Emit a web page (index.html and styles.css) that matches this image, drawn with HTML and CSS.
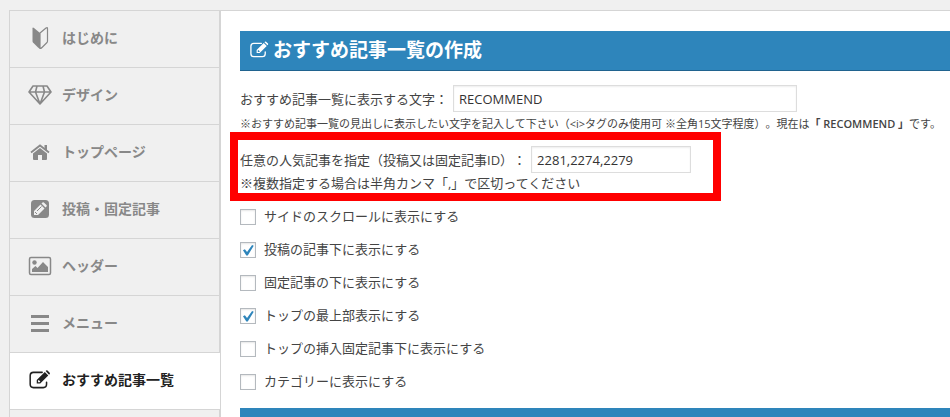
FILE: index.html
```html
<!DOCTYPE html>
<html lang="ja">
<head>
<meta charset="utf-8">
<title>おすすめ記事一覧の作成</title>
<link rel="stylesheet" href="styles.css">
</head>
<body>
<svg class="defs" width="0" height="0">
	<symbol id="ic-edit" viewBox="0 0 22 18">
		<path d="M13 2H5Q2 2 2 5v8q0 3 3 3h9q3 0 3-3v-2" fill="none" stroke="currentColor" stroke-width="1.400" stroke-linecap="round"/>
		<path fill-rule="evenodd" d="M8 12.200V9l7.400-7.400 3.200 3.200-7.400 7.400zM9.200 9.500v1.500h1.500l.6-.6-1.500-1.500zM16.200.8l.5-.5q.6-.5 1.200 0l2 2q.5.600 0 1.200l-.6.600z" fill="currentColor"/>
	</symbol>
</svg>
<div class="wrap">
	<nav class="menu">
		<a href="#start">
			<svg class="icon" viewBox="0 0 24 24">
				<path d="M4.500 2.500Q4.500 1 6 2l6 5v15.500Q11 22.500 10 21.500L5 16.500q-.5-.5-.5-1.500z" fill="currentColor"/>
				<path d="M12 7l6-5q1.500-1 1.500.5V15q0 1-.5 1.500l-5 5q-1 1-2 1z" fill="none" stroke="currentColor" stroke-width="1.200"/>
			</svg>
			はじめに</a>
		<a href="#design">
			<svg class="icon" viewBox="0 0 24 24">
				<path d="M5 3h14l4 6-11 12L1 9zM1 9h22M9 3L7.500 9 12 21l4.500-12L15 3" fill="none" stroke="currentColor" stroke-width="1.600" stroke-linejoin="round"/>
			</svg>
			デザイン</a>
		<a href="#top">
			<svg class="icon" viewBox="0 0 24 24">
				<path d="M5 13.500L12 8l7 5.500V19q0 1-1 1h-4v-5h-4v5H6q-1 0-1-1z" fill="currentColor"/>
				<path d="M3 12.500L12 5.500l9 7" fill="none" stroke="currentColor" stroke-width="1.800"/>
				<path d="M16.500 5H19v6l-2.500-2z" fill="currentColor"/>
			</svg>
			トップページ</a>
		<a href="#post">
			<svg class="icon" viewBox="0 0 24 24">
				<rect x="3" y="3" width="18" height="18" rx="3.500" fill="currentColor"/>
				<path d="M6 18v-4l6.500-6.500 4 4L10 18zM13.500 6.500l1-1q.7-.7 1.400 0l2.600 2.600q.7.700 0 1.400l-1 1z" fill="#f0f0f0"/>
				<path d="M7 15l2 2M9 14l4.500-4.500" stroke="currentColor"/>
			</svg>
			投稿・固定記事</a>
		<a href="#header">
			<svg class="icon" viewBox="0 0 24 24">
				<rect x="1.500" y="3.500" width="21" height="17" rx="1.500" fill="none" stroke="currentColor" stroke-width="1.500"/>
				<circle cx="6.500" cy="8.500" r="2.200" fill="currentColor"/>
				<path d="M4 18v-3l3.500-3 2 2L15 8l5 5v5z" fill="currentColor"/>
			</svg>
			ヘッダー</a>
		<a href="#nav">
			<svg class="icon" viewBox="0 0 24 24">
				<path d="M3 5.500h18M3 12.500h18M3 19.500h18" stroke="currentColor" stroke-width="3"/>
			</svg>
			メニュー</a>
		<a href="#recommend" class="active">
			<svg class="icon"><use href="#ic-edit"/></svg>
			おすすめ記事一覧</a>
		<a href="#next"></a>
	</nav>
	<main class="panel">
		<h2><svg class="head-icon"><use href="#ic-edit"/></svg>おすすめ記事一覧の作成</h2>
		<div class="row">
			<label for="rec_title">おすすめ記事一覧に表示する文字：</label>
			<input type="text" id="rec_title" class="wide" value="RECOMMEND">
		</div>
		<p class="note">※おすすめ記事一覧の見出しに表示したい文字を記入して下さい（&lt;i&gt;タグのみ使用可 ※全角15文字程度）。現在は<b>「 RECOMMEND 」</b>です。</p>
		<div class="highlight">
			<div class="row">
				<label for="rec_ids">任意の人気記事を指定（投稿又は固定記事ID）：</label>
				<input type="text" id="rec_ids" value="2281,2274,2279">
			</div>
			<p>※複数指定する場合は半角カンマ「,」で区切ってください</p>
		</div>
		<div class="checks">
			<label><input type="checkbox">サイドのスクロールに表示にする</label>
			<label><input type="checkbox" checked>投稿の記事下に表示にする</label>
			<label><input type="checkbox">固定記事の下に表示にする</label>
			<label><input type="checkbox" checked>トップの最上部表示にする</label>
			<label><input type="checkbox">トップの挿入固定記事下に表示にする</label>
			<label><input type="checkbox">カテゴリーに表示にする</label>
		</div>
		<h2></h2>
	</main>
</div>
</body>
</html>
```
FILE: styles.css
```css
* {
	box-sizing: border-box;
}
body {
	margin: 0;
	background: #f0f0f0;
	color: #444;
	font-family: "Open Sans", "Noto Sans CJK JP", sans-serif;
	font-size: 13px;
	line-height: 20px;
	text-spacing-trim: space-all;
}
p {
	margin: 0;
}
.defs {
	position: absolute;
}
.wrap {
	display: flex;
	height: 100vh;
	padding: 10px 0 0 9px;
	overflow: hidden;
}

/* left menu */
.menu {
	flex: none;
	width: 212px;
	border: 1px solid #d5d5d5;
	border-right: 2px solid #d5d5d5;
	border-bottom: 0;
}
.menu a {
	display: flex;
	align-items: center;
	gap: 10px;
	height: 57px;
	padding: 0 0 2px 18px;
	border-bottom: 1px solid #d5d5d5;
	color: #888;
	font-size: 14px;
	font-weight: bold;
	text-decoration: none;
}
.menu a.active {
	margin-right: -1px;
	background: #fff;
	color: #222;
}
.icon {
	width: 24px;
	height: 24px;
}
.active .icon {
	height: 20px;
}

/* settings */
.panel {
	flex: 1;
	min-width: 0;
	padding: 20px 0 0 19px;
	border-top: 1px solid #d5d5d5;
	background: #fff;
}
h2 {
	display: flex;
	align-items: center;
	gap: 3px;
	height: 40px;
	margin: 0 0 14px;
	padding: 0 9px 2px;
	border-bottom: 1px solid #20638f;
	background: #2e85bb;
	color: #fff;
	font-size: 19px;
}
.head-icon {
	width: 21px;
	height: 18px;
}
.row {
	display: flex;
	align-items: center;
	gap: 5px;
}
input[type="text"] {
	width: 160px;
	height: 27px;
	margin: 0;
	padding: 0 5px;
	border: 1px solid #ddd;
	background: #fff;
	color: #333;
	font: inherit;
	box-shadow: inset 0 1px 2px rgba(0,0,0,0.07);
}
input.wide {
	width: 344px;
}
.note {
	padding-top: 3px;
	font-size: 11px;
	line-height: 17px;
	white-space: nowrap;
}
.note b {
	font-weight: 600;
}
.highlight {
	width: 491px;
	margin-left: -10px;
	padding: 6px 2px 0;
	border: 8px solid #f00;
}
.checks {
	display: flex;
	flex-direction: column;
	gap: 13px;
	margin: 5px 0 17px;
}
.checks label {
	display: flex;
	align-items: center;
	gap: 8px;
}
.checks input {
	appearance: none;
	display: grid;
	place-items: center;
	width: 16px;
	height: 16px;
	margin: 2px 0 0;
	border: 1px solid #b4b9be;
	background: #fff;
	box-shadow: inset 0 1px 2px rgba(0,0,0,0.1);
}
.checks input:checked::before {
	content: "";
	width: 12px;
	height: 12px;
	background: #2e85bb;
	clip-path: polygon(8% 52%, 24% 44%, 42% 66%, 84% 8%, 98% 14%, 48% 96%, 36% 96%);
}
```
